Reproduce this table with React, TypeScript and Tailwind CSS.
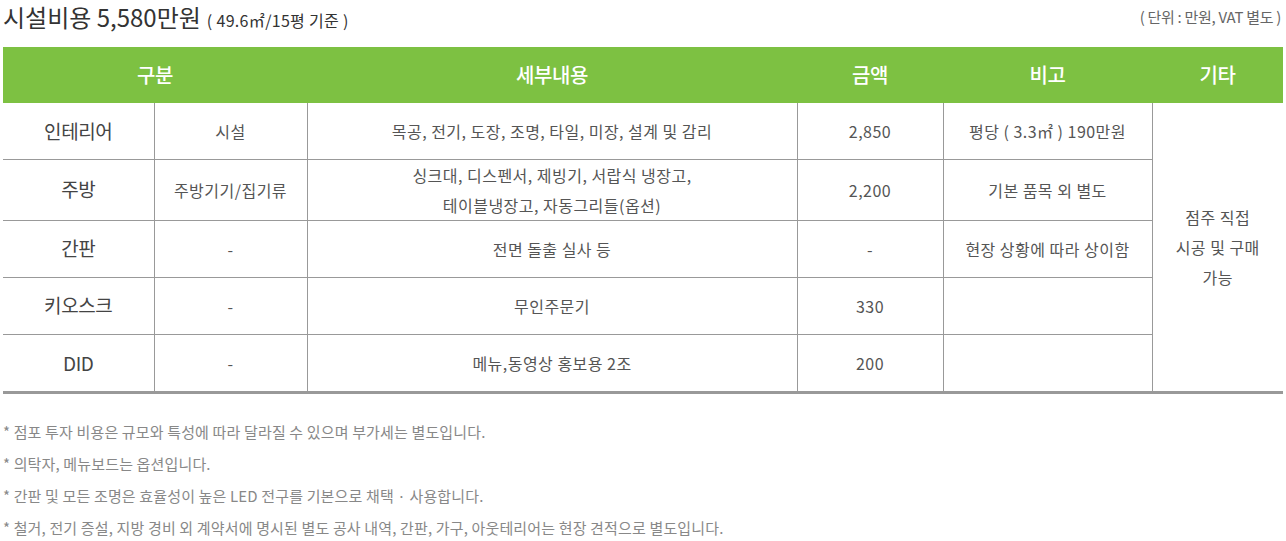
const rows = [
  { name: '인테리어', sub: '시설', detail: ['목공, 전기, 도장, 조명, 타일, 미장, 설계 및 감리'], price: '2,850', note: '평당 ( 3.3㎡ ) 190만원', h: 'h-[56px]' },
  { name: '주방', sub: '주방기기/집기류', detail: ['싱크대, 디스펜서, 제빙기, 서랍식 냉장고,', '테이블냉장고, 자동그리들(옵션)'], price: '2,200', note: '기본 품목 외 별도', h: 'h-[61px]' },
  { name: '간판', sub: '-', detail: ['전면 돌출 실사 등'], price: '-', note: '현장 상황에 따라 상이함', h: 'h-[57px]' },
  { name: '키오스크', sub: '-', detail: ['무인주문기'], price: '330', note: '', h: 'h-[57px]' },
  { name: 'DID', sub: '-', detail: ['메뉴,동영상 홍보용 2조'], price: '200', note: '', h: 'h-[57px]' },
]

const notes = [
  '* 점포 투자 비용은 규모와 특성에 따라 달라질 수 있으며 부가세는 별도입니다.',
  '* 의탁자, 메뉴보드는 옵션입니다.',
  '* 간판 및 모든 조명은 효율성이 높은 LED 전구를 기본으로 채택 · 사용합니다.',
  '* 철거, 전기 증설, 지방 경비 외 계약서에 명시된 별도 공사 내역, 간판, 가구, 아웃테리어는 현장 견적으로 별도입니다.',
]

export default function App() {
  return (
    <div className="w-[1286px] h-[541px] bg-white px-[3px] pt-[2px] font-['Noto_Sans_CJK_KR','Noto_Sans',sans-serif] overflow-hidden">
      {/* Title */}
      <div className="flex items-center justify-between h-[30px]">
        <div className="flex items-baseline text-[#333]">
          <span className="text-[24px] leading-[30px]">시설비용 5,580만원</span>
          <span className="ml-[6px] text-[16px] tracking-[0.02em]">( 49.6㎡/15평 기준 )</span>
        </div>
        <span className="text-[15px] text-[#666] leading-[30px] tracking-[-0.02em] mr-[2px]">( 단위 : 만원, VAT 별도 )</span>
      </div>

      <table className="mt-[15px] w-[1280px] table-fixed border-collapse text-center">
        <colgroup>
          <col className="w-[151px]" />
          <col className="w-[153px]" />
          <col className="w-[490px]" />
          <col className="w-[146px]" />
          <col className="w-[209px]" />
          <col className="w-[131px]" />
        </colgroup>
        <thead>
          <tr className="h-[56px] bg-[#7dc142] text-white text-[20px] tracking-[-0.02em]">
            <th colSpan={2} className="font-medium">구분</th>
            <th className="font-medium">세부내용</th>
            <th className="font-medium">금액</th>
            <th className="font-medium">비고</th>
            <th className="font-medium">기타</th>
          </tr>
        </thead>
        <tbody className="text-[16px] text-[#555] tracking-[0.03em]">
          {rows.map((r, i) => (
            <tr key={r.name} className={`${r.h} ${i < rows.length - 1 ? 'border-b border-[#999]' : ''}`}>
              <td className="text-[19px] text-[#444] tracking-[-0.02em] border-r border-[#999]">{r.name}</td>
              <td className="border-r border-[#999]">{r.sub}</td>
              <td className="border-r border-[#999] leading-[30px]">
                {r.detail.map((d) => (
                  <div key={d}>{d}</div>
                ))}
              </td>
              <td className="border-r border-[#999]">{r.price}</td>
              <td className="border-r border-[#999]">{r.note}</td>
              {i === 0 && (
                <td rowSpan={5} className="leading-[30px]">
                  <div>점주 직접</div>
                  <div>시공 및 구매</div>
                  <div>가능</div>
                </td>
              )}
            </tr>
          ))}
        </tbody>
      </table>
      <div className="h-[3px] bg-[#999] w-[1280px]" />

      <div className="mt-[22px] text-[15px] text-[#888] leading-[32px] tracking-[0.01em]">
        {notes.map((n) => (
          <p key={n}>{n}</p>
        ))}
      </div>
    </div>
  )
}
